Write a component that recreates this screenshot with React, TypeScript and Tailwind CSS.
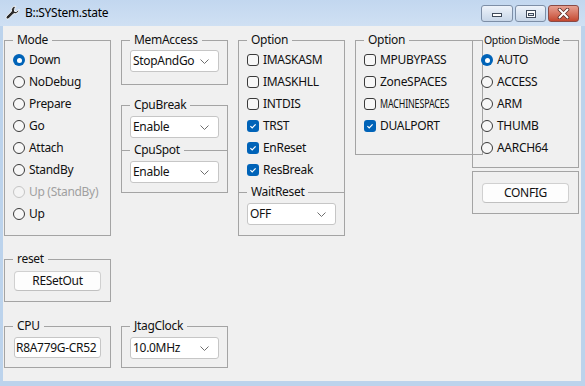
import React from "react";

function Radio({ label, checked, disabled }: { label: string; checked?: boolean; disabled?: boolean }) {
  return (
    <div className="h-[22px] flex items-center gap-[4px]">
      {checked ? (
        <span className="w-[12px] h-[12px] rounded-full bg-[#0063b8] flex items-center justify-center">
          <span className="w-[5px] h-[5px] rounded-full bg-white" />
        </span>
      ) : (
        <span
          className={
            disabled
              ? "w-[12px] h-[12px] rounded-full border border-[#c4c4c4] bg-[#f4f4f4]"
              : "w-[12px] h-[12px] rounded-full border border-[#3a3a3a] bg-[#f7f7f7]"
          }
        />
      )}
      <span className={disabled ? "text-[#a0a0a0]" : "text-[#111]"}>{label}</span>
    </div>
  );
}

function Check({ label, checked, narrow }: { label: string; checked?: boolean; narrow?: boolean }) {
  return (
    <div className="h-[22px] flex items-center gap-[4px]">
      {checked ? (
        <span className="w-[12px] h-[12px] rounded-[3px] bg-[#0063b8] flex items-center justify-center">
          <svg width="10" height="10" viewBox="0 0 10 10">
            <path d="M2.4 5.2 L4.2 7 L7.6 3.3" fill="none" stroke="white" strokeWidth="1.2" />
          </svg>
        </span>
      ) : (
        <span className="w-[12px] h-[12px] rounded-[3px] border border-[#3a3a3a] bg-[#f7f7f7]" />
      )}
      {narrow ? (
        <span className="inline-block text-[#111] text-[12px] tracking-[-0.2px] scale-x-[0.74] origin-left whitespace-nowrap">
          {label}
        </span>
      ) : (
        <span className="text-[#111]">{label}</span>
      )}
    </div>
  );
}

function Select({ value, className }: { value: string; className?: string }) {
  return (
    <div
      className={
        "h-[22px] bg-white border border-[#c6c6c6] rounded-[3px] flex items-center justify-between pl-[2px] pr-[9px] " +
        (className ?? "")
      }
    >
      <span className="text-[#111]">{value}</span>
      <svg width="9" height="5" viewBox="0 0 9 5">
        <path d="M0.5 0.5 L4.5 4.5 L8.5 0.5" fill="none" stroke="#6e6e6e" strokeWidth="1" />
      </svg>
    </div>
  );
}

function Divider({ label }: { label: string }) {
  return (
    <div className="-mx-[8px] h-[16px] flex items-center">
      <span className="w-[8px] h-px bg-[#a4a4a4]" />
      <span className="px-[4px] leading-[16px] text-[#111]">{label}</span>
      <span className="flex-1 h-px bg-[#a4a4a4]" />
    </div>
  );
}

function Btn({ label }: { label: string }) {
  return (
    <div className="h-[20px] bg-[#fdfdfd] border border-[#d0d0d0] border-b-[#c0c0c0] rounded-[4px] flex items-center justify-center text-[#111]">
      {label}
    </div>
  );
}

export default function App() {
  return (
    <div className="w-[585px] h-[386px] bg-[#bcd3ec] flex flex-col font-['Noto_Sans',sans-serif] text-[12px] leading-[16px] tracking-[-0.3px] overflow-hidden">
      {/* title bar */}
      <div className="h-[26px] shrink-0 flex items-start justify-between bg-gradient-to-b from-[#c2d7ef] to-[#cfe0f3]">
        <div className="flex items-center h-[25px] pl-[5px] gap-[4px]">
          <svg width="16" height="16" viewBox="0 0 16 16">
            <path
              d="M10.8 1.2 a4 4 0 0 0 -4.3 5.1 L1.6 11.2 a1.6 1.6 0 0 0 2.3 2.3 L8.8 8.6 a4 4 0 0 0 5.1 -4.3 L11.6 6.6 L9.6 6.4 L9.4 4.4 Z"
              fill="#2b2b2b"
              stroke="#ffffff"
              strokeWidth="0.9"
              strokeLinejoin="round"
            />
          </svg>
          <span className="text-[#000] text-[12px]">B::SYStem.state</span>
        </div>
        <div className="flex gap-[2px] mt-[5px] mr-[6px]">
          <div className="w-[32px] h-[17px] rounded-[3px] border border-[#7d8ea6] bg-gradient-to-b from-[#eef3fa] to-[#c7d6e8] flex items-center justify-center">
            <span className="w-[10px] h-[4px] mt-[3px] bg-white border border-[#3f4a5a]" />
          </div>
          <div className="w-[31px] h-[17px] rounded-[3px] border border-[#7d8ea6] bg-gradient-to-b from-[#eef3fa] to-[#c7d6e8] flex items-center justify-center">
            <span className="w-[10px] h-[8px] border border-[#3f4a5a] bg-white flex items-center justify-center">
              <span className="w-[6px] h-[3px] mt-[1px] border border-[#3f4a5a] bg-[#dfe7f1]" />
            </span>
          </div>
          <div className="w-[31px] h-[17px] rounded-[3px] border border-[#8a4a45] bg-gradient-to-b from-[#e6a092] to-[#c4472f] flex items-center justify-center">
            <svg width="13" height="11" viewBox="0 0 13 11">
              <path d="M2.5 1.5 L10.5 9.5 M10.5 1.5 L2.5 9.5" stroke="#5a2a24" strokeWidth="3.6" strokeLinecap="round" />
              <path d="M2.5 1.5 L10.5 9.5 M10.5 1.5 L2.5 9.5" stroke="#ffffff" strokeWidth="2" strokeLinecap="round" />
            </svg>
          </div>
        </div>
      </div>

      {/* client area */}
      <div className="ml-[3px] mr-[4px] mb-[5px] flex-1 bg-[#f0f0f0] flex gap-[10px] pl-[1px]">
        {/* column 1 */}
        <div className="w-[107px] flex flex-col">
          <fieldset className="mt-[6px] h-[204px] border border-[#a4a4a4] px-[8px]">
            <legend className="px-[4px] leading-[16px] text-[#111]">Mode</legend>
            <div className="pt-[1px]">
              <Radio label="Down" checked />
              <Radio label="NoDebug" />
              <Radio label="Prepare" />
              <Radio label="Go" />
              <Radio label="Attach" />
              <Radio label="StandBy" />
              <Radio label="Up (StandBy)" disabled />
              <Radio label="Up" />
            </div>
          </fieldset>
          <fieldset className="mt-[15px] h-[51px] border border-[#a4a4a4] px-[9px]">
            <legend className="px-[4px] -ml-[1px] leading-[16px] text-[#111]">reset</legend>
            <div className="mt-[4px]">
              <Btn label="RESetOut" />
            </div>
          </fieldset>
          <fieldset className="mt-[16px] h-[50px] border border-[#a4a4a4] px-[9px]">
            <legend className="px-[4px] -ml-[1px] leading-[16px] text-[#111]">CPU</legend>
            <div className="mt-[3px] h-[21px] bg-white border border-[#c6c6c6] rounded-[3px] flex items-center pl-[1px] text-[#111] whitespace-nowrap overflow-hidden">
              R8A779G-CR52
            </div>
          </fieldset>
        </div>

        {/* column 2 */}
        <div className="w-[107px] flex flex-col">
          <fieldset className="mt-[6px] h-[53px] border border-[#a4a4a4] px-[8px]">
            <legend className="px-[4px] leading-[16px] text-[#111]">MemAccess</legend>
            <Select value="StopAndGo" className="mt-[2px]" />
          </fieldset>
          <fieldset className="mt-[12px] h-[96px] border border-[#a4a4a4] px-[8px]">
            <legend className="px-[4px] leading-[16px] text-[#111]">CpuBreak</legend>
            <Select value="Enable" className="mt-[3px]" />
            <div className="mt-[4px]">
              <Divider label="CpuSpot" />
            </div>
            <Select value="Enable" className="mt-[3px]" />
          </fieldset>
          <fieldset className="mt-[125px] h-[50px] border border-[#a4a4a4] px-[8px]">
            <legend className="px-[4px] leading-[16px] text-[#111]">JtagClock</legend>
            <Select value="10.0MHz" className="mt-[3px]" />
          </fieldset>
        </div>

        {/* column 3 */}
        <div className="w-[107px] flex flex-col">
          <fieldset className="mt-[6px] h-[204px] border border-[#a4a4a4] px-[8px]">
            <legend className="px-[4px] leading-[16px] text-[#111]">Option</legend>
            <div className="pt-[1px]">
              <Check label="IMASKASM" />
              <Check label="IMASKHLL" />
              <Check label="INTDIS" />
              <Check label="TRST" checked />
              <Check label="EnReset" checked />
              <Check label="ResBreak" checked />
            </div>
            <div className="mt-[3px]">
              <Divider label="WaitReset" />
            </div>
            <Select value="OFF" className="mt-[3px]" />
          </fieldset>
        </div>

        {/* column 4 */}
        <div className="w-[107px] flex flex-col">
          <fieldset className="mt-[6px] h-[123px] border border-[#a4a4a4] px-[8px]">
            <legend className="px-[4px] leading-[16px] text-[#111]">Option</legend>
            <div className="pt-[1px]">
              <Check label="MPUBYPASS" />
              <Check label="ZoneSPACES" />
              <Check label="MACHINESPACES" narrow />
              <Check label="DUALPORT" checked />
            </div>
          </fieldset>
        </div>

        {/* column 5 */}
        <div className="w-[107px] flex flex-col">
          <fieldset className="mt-[6px] h-[136px] border border-[#a4a4a4] px-[8px]">
            <legend className="px-[3px] leading-[16px] text-[10.5px] tracking-[-0.35px] text-[#111]">Option DisMode</legend>
            <div className="pt-[1px]">
              <Radio label="AUTO" checked />
              <Radio label="ACCESS" />
              <Radio label="ARM" />
              <Radio label="THUMB" />
              <Radio label="AARCH64" />
            </div>
          </fieldset>
          <div className="mt-[3px] h-[43px] border border-[#a4a4a4] px-[9px] pt-[11px]">
            <Btn label="CONFIG" />
          </div>
        </div>
      </div>
    </div>
  );
}
